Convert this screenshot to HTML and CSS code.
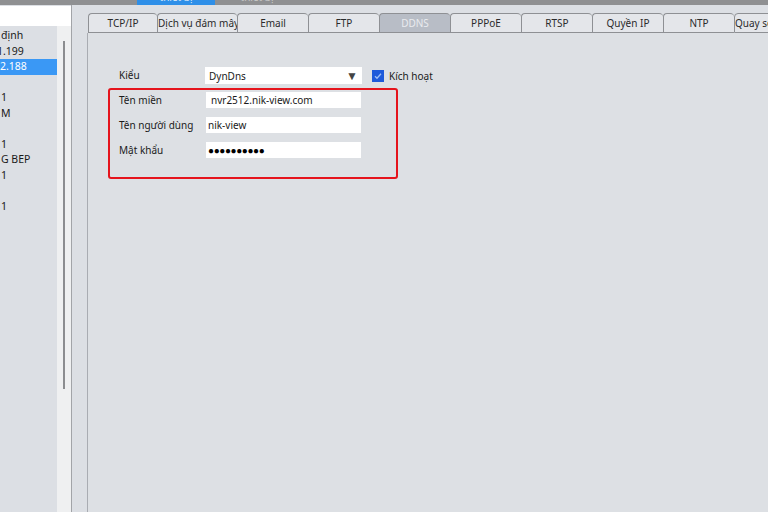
FILE: index.html
```html
<!DOCTYPE html>
<html>
<head>
  <title>DDNS</title>
  <meta charset="UTF-8">
  <link rel="stylesheet" href="styles.css">
</head>
<body>
  <div class="topbar">
    <div class="top-tab active"><span>thiết bị</span></div>
    <div class="top-tab"><span>thiết bị</span></div>
  </div>

  <div class="main">
    <div class="sidebar">
      <div class="search"></div>
      <div class="list-wrap">
        <ul class="list">
          <li>định</li>
          <li class="clip">1.199</li>
          <li class="selected">2.188</li>
          <li></li>
          <li>1</li>
          <li>M</li>
          <li></li>
          <li>1</li>
          <li>G BEP</li>
          <li>1</li>
          <li></li>
          <li>1</li>
        </ul>
        <div class="scroll"><div class="thumb"></div></div>
      </div>
    </div>

    <div class="content">
      <div class="tabs">
        <div class="tab tab-first">TCP/IP</div>
        <div class="tab tab-wide">Dịch vụ đám mây</div>
        <div class="tab">Email</div>
        <div class="tab">FTP</div>
        <div class="tab active">DDNS</div>
        <div class="tab">PPPoE</div>
        <div class="tab">RTSP</div>
        <div class="tab">Quyền IP</div>
        <div class="tab">NTP</div>
        <div class="tab">Quay số điện thoại</div>
      </div>
      <div class="panel">
        <div class="form">
          <label>Kiểu</label>
          <div class="select">
            <span>DynDns</span>
            <span class="arrow">▼</span>
          </div>
          <div class="enable">
            <span class="checkbox">
              <svg width="12" height="12" viewBox="0 0 12 12"><path d="M3 6.2 L5 8.2 L9 3.8" fill="none" stroke="#9fc0f5" stroke-width="1.3"/></svg>
            </span>
            <span>Kích hoạt</span>
          </div>

          <label>Tên miền</label>
          <div class="field domain">nvr2512.nik-view.com</div>
          <div></div>

          <label>Tên người dùng</label>
          <div class="field">nik-view</div>
          <div></div>

          <label>Mật khẩu</label>
          <div class="field password">●●●●●●●●●●</div>
          <div></div>
        </div>
        <div class="highlight"></div>
      </div>
    </div>
  </div>
</body>
</html>
```

FILE: styles.css
```css
html, body {
  margin: 0;
  padding: 0;
}
body {
  width: 768px;
  height: 512px;
  overflow: hidden;
  background-color: #dcdfe4;
  font-family: "Noto Sans", "Liberation Sans", sans-serif;
  font-size: 10px;
  color: #1a1a1a;
}
.topbar {
  display: flex;
  height: 5px;
  padding-left: 137px;
  background-color: #8f9092;
  overflow: hidden;
}
.top-tab {
  width: 84px;
  text-align: center;
  color: #c8c8c8;
  overflow: hidden;
}
.top-tab span {
  display: block;
  margin-top: -9px;
  line-height: 12px;
}
.top-tab.active {
  width: 78px;
  background-color: #2e8fe8;
  color: #d6e8fb;
}
.main {
  display: flex;
  height: 507px;
}
.sidebar {
  width: 71px;
  border-right: 1px solid #a2a4a8;
  display: flex;
  flex-direction: column;
}
.search {
  height: 20px;
  margin-top: 1px;
  background-color: #ffffff;
}
.list-wrap {
  flex: 1;
  display: flex;
}
.list {
  width: 57px;
  margin: 0;
  padding: 2px 0 0 0;
  list-style: none;
  font-size: 10.5px;
  overflow: hidden;
}
.list li {
  height: 15.5px;
  line-height: 15.5px;
  white-space: nowrap;
  padding-left: 1px;
}
.list li.clip {
  text-indent: -4px;
}
.list li.selected {
  background-color: #3a98f5;
  color: #ffffff;
  padding-left: 0;
}
.scroll {
  width: 14px;
  background-color: #eff0f1;
}
.thumb {
  width: 2px;
  height: 348px;
  margin: 15px 0 0 6px;
  background-color: #8c8d90;
}
.content {
  flex: 1;
  padding: 8px 0 0 15px;
  display: flex;
  flex-direction: column;
  min-width: 0;
}
.tabs {
  display: flex;
  height: 20px;
  margin-left: 1px;
}
.tab {
  flex: none;
  width: 71px;
  box-sizing: border-box;
  border: 1px solid #8e9094;
  border-right: none;
  border-radius: 4px 4px 0 0;
  background-color: #e4e6ea;
  text-align: center;
  line-height: 18px;
  white-space: nowrap;
  overflow: hidden;
  color: #2a2a2a;
}
.tab:last-child {
  border-right: 1px solid #8e9094;
}
.tab-first {
  width: 69px;
}
.tab-wide {
  width: 80px;
}
.tab.active {
  background-color: #b8bdc6;
  color: #e9ebef;
}
.panel {
  flex: 1;
  position: relative;
  border-left: 1px solid #a9acb2;
  background-color: #dde0e4;
}
.form {
  display: grid;
  grid-template-columns: 86px 157px auto;
  grid-auto-rows: 25px;
  padding: 34px 0 0 31px;
}
.form label {
  line-height: 17px;
}
.select {
  height: 17px;
  background-color: #ffffff;
  display: flex;
  justify-content: space-between;
  align-items: center;
  padding: 0 4px 0 4px;
  box-sizing: border-box;
}
.arrow {
  font-size: 12px;
  color: #444444;
}
.enable {
  display: flex;
  align-items: center;
  height: 17px;
  margin-left: 10px;
  gap: 5px;
}
.checkbox {
  width: 12px;
  height: 12px;
  background-color: #1e5ada;
  display: block;
}
.checkbox svg {
  display: block;
}
.field {
  width: 155px;
  height: 16px;
  margin-left: 1px;
  background-color: #ffffff;
  line-height: 16px;
  padding-left: 2px;
  box-sizing: border-box;
}
.field.domain {
  padding-left: 5px;
}
.field.password {
  font-size: 10px;
  letter-spacing: -0.4px;
  color: #000000;
}
.highlight {
  position: absolute;
  left: 20px;
  top: 55px;
  width: 290px;
  height: 91px;
  box-sizing: border-box;
  border: 2.5px solid #e5141c;
  border-radius: 3px;
}
```
